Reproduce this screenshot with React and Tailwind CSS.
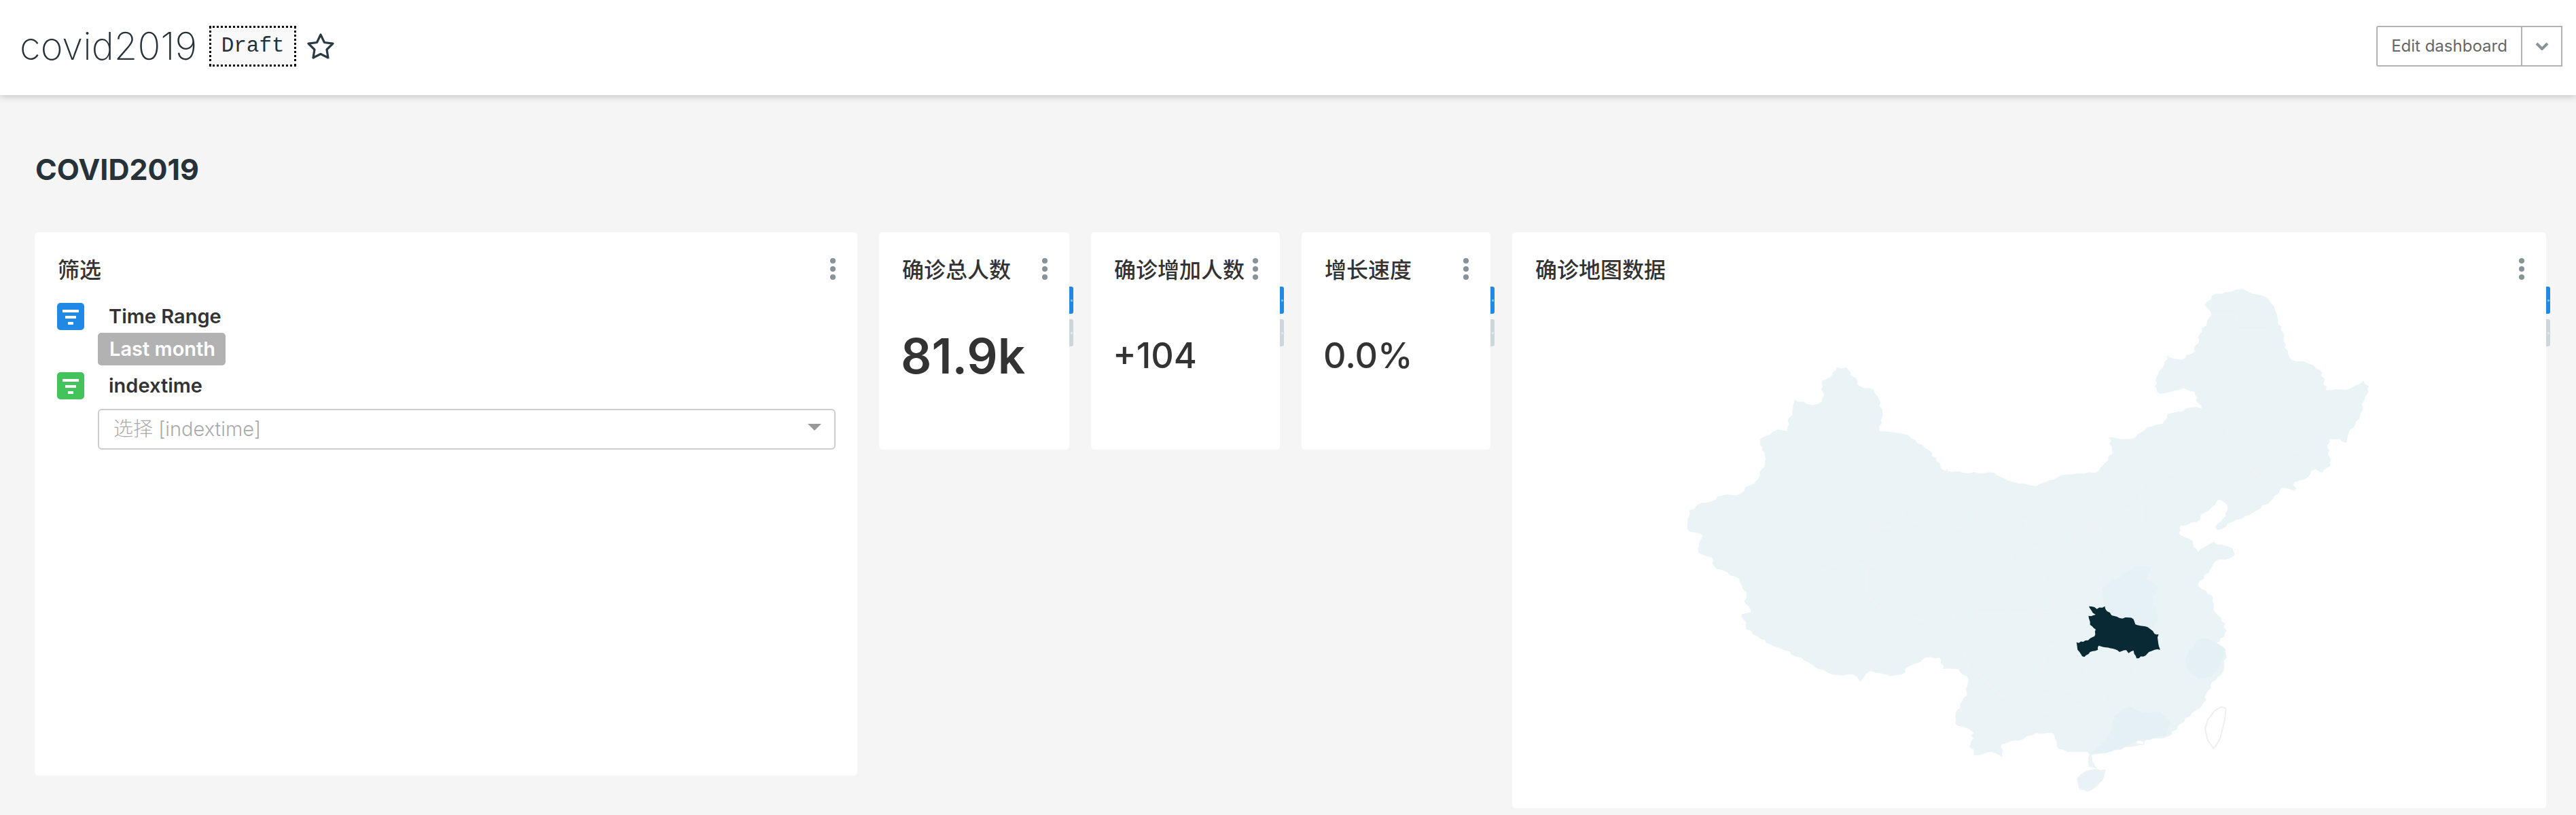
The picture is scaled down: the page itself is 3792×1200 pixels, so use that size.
const sansFont = { fontFamily: 'Inter, "Noto Sans CJK SC", sans-serif' };

// Map traces, in the coordinates they were measured in
const CHINA = "1030,215 1040,190 1060,180 1085,172 1100,185 1120,195 1135,240 1140,280 1150,335 1155,360 1180,370 1200,395 1205,440 1235,440 1260,415 1268,430 1262,460 1255,510 1240,545 1235,580 1225,570 1210,570 1212,640 1200,660 1190,650 1180,670 1160,685 1160,708 1140,700 1125,735 1100,765 1070,790 1048,812 1048,795 1060,775 1062,745 1050,730 1030,765 1018,790 995,800 992,820 1012,840 1020,870 1042,843 1070,860 1072,880 1045,895 1035,925 1020,955 1040,985 1045,1030 1060,1060 1058,1095 1045,1112 1060,1135 1055,1190 1040,1215 1028,1270 1000,1320 975,1360 950,1365 938,1380 900,1395 880,1405 865,1410 875,1445 862,1440 860,1400 830,1400 815,1385 810,1350 785,1350 760,1370 735,1380 737,1415 720,1400 695,1410 690,1380 695,1350 668,1325 670,1290 685,1250 685,1200 672,1180 650,1180 645,1150 625,1150 605,1170 590,1195 575,1200 545,1185 530,1215 520,1195 490,1195 470,1180 445,1150 420,1130 405,1120 385,1100 365,1075 358,1035 372,1030 362,1000 365,975 350,935 322,915 315,885 295,870 302,825 282,815 282,760 300,740 315,735 330,720 350,720 380,680 388,650 392,630 385,570 410,545 425,548 435,465 460,480 475,470 475,415 490,400 495,380 510,380 530,430 550,440 562,490 558,550 600,560 630,600 648,650 680,660 725,660 745,680 785,695 825,665 870,660 890,625 895,600 890,565 925,570 945,540 968,530 975,505 1018,485 1025,490 1015,445 1000,435 965,450 957,430 975,350 995,360 1015,340 1020,300 1040,240";

const BORDERS = [
  "648,650 620,700 595,745 590,790 550,815 555,850 565,880 560,910 540,905 510,895 480,915 445,935 415,925 385,935 375,965",
  "550,815 615,790 660,825 665,800 690,815 720,845 750,880 745,930 720,975 750,1000 745,1030 700,1030 670,990 665,1050 635,1060 600,1040 560,1020 540,985 540,910",
  "665,1050 680,1130 688,1180",
  "655,650 675,720 705,730 695,770 725,810 770,785 770,825 760,850 785,860 830,850 880,785 935,745 940,680 985,660 1005,720 1020,670 1040,690 1090,640 1115,680 1120,715 1100,730",
  "1040,240 1075,240 1078,280 1120,280 1125,320 1100,400 1075,460 1090,530 1130,550 1150,600 1180,610 1210,625",
  "1060,520 1065,580 1090,630 1115,680",
  "880,785 875,880 880,960 885,1010",
  "940,745 940,800 925,870 875,880",
  "780,860 800,900 795,960 810,1000 790,1030 760,1000",
  "815,875 845,890 845,940 815,950 815,875",
  "700,1030 750,1030 790,1030 860,1020",
  "850,1110 800,1120 795,1170 770,1200 760,1240 735,1255 700,1190 688,1100",
  "860,1150 855,1230 800,1250 770,1215",
  "780,1300 830,1290 885,1250 880,1300",
  "930,1150 925,1290",
  "1010,1200 975,1260 960,1300",
  "950,900 945,1000 955,1080",
  "1000,960 1030,1010 1045,1040",
];

const HUBEI = "525,338 550,342 560,350 595,338 605,360 625,378 660,390 700,388 722,395 730,418 762,425 795,438 815,460 833,462 830,490 840,530 815,530 790,540 765,560 735,568 725,548 722,533 700,545 690,532 660,540 630,525 600,520 568,512 565,530 530,540 505,562 490,550 475,530 470,497 500,495 530,480 550,470 555,440 530,420 523,380 555,375 535,355";
const HENAN = "580,260 640,220 740,160 800,165 780,215 830,250 810,300 830,400 795,438 762,425 730,418 722,395 700,388 660,390 625,378 605,360 595,338";
const ZHEJIANG = "950,570 1000,490 1040,480 1090,500 1130,530 1100,610 1060,650 1010,660 965,620";
const GUANGDONG = "620,900 640,820 700,780 760,810 840,805 885,850 870,905 820,920 730,935 680,960 600,985 530,990 580,950";
const HAINAN = "475,1100 500,1075 560,1060 595,1062 590,1090 560,1130 520,1155 485,1145";
const TAIWAN = "1080,800 1110,782 1130,790 1125,840 1105,920 1085,955 1075,965 1050,930 1038,880 1050,840";

// Break long edges into small wobbles so borders read like real coastlines
function roughen(points, step, amount) {
  const pts = points.split(" ").map((p) => p.split(",").map(Number));
  const out = [];
  let seed = 7;
  pts.forEach((a, i) => {
    const b = pts[(i + 1) % pts.length];
    const dx = b[0] - a[0];
    const dy = b[1] - a[1];
    const len = Math.hypot(dx, dy) || 1;
    const n = Math.max(1, Math.round(len / step));
    for (let k = 0; k < n; k++) {
      seed = (seed * 73 + 41) % 101;
      const off = k === 0 ? 0 : ((seed / 100) * 2 - 1) * amount;
      out.push(`${a[0] + (dx * k) / n - (dy / len) * off},${a[1] + (dy * k) / n + (dx / len) * off}`);
    }
  });
  return out.join(" ");
}

function Kebab() {
  return (
    <div className="flex flex-col gap-[4px] pt-[2px] shrink-0">
      <span className="block w-[8px] h-[8px] rounded-full bg-[#879399]"></span>
      <span className="block w-[8px] h-[8px] rounded-full bg-[#879399]"></span>
      <span className="block w-[8px] h-[8px] rounded-full bg-[#879399]"></span>
    </div>
  );
}

function CardHeader({ title }) {
  return (
    <div className="flex items-start justify-between">
      <div className="text-[32px] leading-[40px] font-medium text-[#333333] whitespace-nowrap">
        {title}
      </div>
      <Kebab />
    </div>
  );
}

// Blue and gray handles sticking out of a chart's right edge
function EdgeTabs() {
  return (
    <div className="absolute left-full top-[80px] flex flex-col gap-[8px]">
      <span className="flex items-center justify-center w-[6px] h-[40px] rounded-r-[3px] bg-[#2089e5]">
        <span className="block w-[3px] h-[3px] bg-[#7fbcf0]"></span>
      </span>
      <span className="flex items-center justify-center w-[6px] h-[40px] rounded-r-[3px] bg-[#ccd6db]">
        <span className="block w-[3px] h-[3px] bg-[#e2e8eb]"></span>
      </span>
    </div>
  );
}

function FilterIcon({ color }) {
  return (
    <div className={`w-[40px] h-[40px] rounded-[5px] shrink-0 flex flex-col items-center gap-[5px] pt-[10px] ${color}`}>
      <span className="block w-[24px] h-[4px] bg-white"></span>
      <span className="block w-[16px] h-[4px] bg-white"></span>
      <span className="block w-[8px] h-[4px] bg-white"></span>
    </div>
  );
}

function FilterLabel({ color, label }) {
  return (
    <div className="flex items-center gap-[36px] h-[40px]">
      <FilterIcon color={color} />
      <span className="text-[29px] leading-[40px] font-semibold text-[#333333]">{label}</span>
    </div>
  );
}

function StatCard({ title, value, width, big }) {
  return (
    <div className={`relative h-[320px] bg-white rounded-[5px] pl-[34px] pr-[32px] pt-[36px] shrink-0 ${width}`}>
      <CardHeader title={title} />
      <EdgeTabs />
      <div
        className={`mt-[66px] -ml-[2px] h-[80px] flex items-center text-[#333333] ${
          big ? "text-[71px] font-semibold" : "text-[52px] font-medium"
        }`}
      >
        {value}
      </div>
    </div>
  );
}

function ChinaMap() {
  return (
    <svg
      className="block w-[1522px] h-[768px]"
      viewBox="2226 422 1522 768"
      fill="none"
    >
      <g transform="translate(2200 330) scale(1.0153 0.555)">
        <polygon points={roughen(CHINA, 8, 3)} fill="#eaf3f6" />
        {BORDERS.map((line) => (
          <polyline
            key={line}
            points={line}
            stroke="#eff3f5"
            strokeWidth="2"
            strokeLinejoin="round"
            vectorEffect="non-scaling-stroke"
          />
        ))}
      </g>
      <g transform="translate(2900 780) scale(0.3333)">
        <polygon points={roughen(HENAN, 14, 4)} fill="#e6f1f6" />
        <polygon points={roughen(ZHEJIANG, 14, 4)} fill="#e5f0f4" />
        <polygon points={roughen(GUANGDONG, 14, 4)} fill="#e4f0f4" />
        <polygon points={roughen(HAINAN, 20, 4)} fill="#e9f2f6" stroke="#eef2f4" strokeWidth="6" />
        <polygon points="730,945 740,930 770,935 765,950" fill="#ffffff" stroke="#eef2f4" strokeWidth="5" />
        <polygon points={TAIWAN} fill="#ffffff" stroke="#eeeeee" strokeWidth="6" />
        <polygon points={roughen(HUBEI, 12, 4)} fill="#092935" />
      </g>
    </svg>
  );
}

export default function App() {
  return (
    <div className="h-[1200px] overflow-hidden bg-[#f5f5f5]" style={sansFont}>
      {/* Header */}
      <div className="relative h-[140px] bg-white flex items-center justify-between pl-[29px] pr-[20px] pb-[4px] shadow-[0_2px_10px_rgba(0,0,0,0.22)]">
        <div className="flex items-center">
          <h1 className="text-[56px] leading-[70px] font-extralight text-[#263238]">covid2019</h1>
          <div className="ml-[18px] h-[60px] w-[128px] flex items-center justify-center border-[3px] border-dotted border-black bg-[#f9f9f9] text-[31px] text-[#263238] font-['Liberation_Mono',monospace]">
            Draft
          </div>
          <svg className="ml-[16px] w-[40px] h-[38px]" viewBox="0 0 40 38" fill="none">
            <polygon
              points="20,2 25.5,13.5 38,15.2 29,24 31,36 20,30.5 9,36 11,24 2,15.2 14.5,13.5"
              stroke="#2b3a42"
              strokeWidth="3.2"
              strokeLinejoin="round"
            />
          </svg>
        </div>
        <div className="flex h-[60px]">
          <div className="w-[215px] flex items-center justify-center border-2 border-[#b2b2b2] rounded-[3px] text-[24px] text-[#666666] bg-white">
            Edit dashboard
          </div>
          <div className="w-[61px] -ml-[2px] flex items-center justify-center border-2 border-[#b2b2b2]">
            <svg className="w-[20px] h-[12px]" viewBox="0 0 20 12" fill="none">
              <path d="M2 2 L10 10 L18 2" stroke="#879399" strokeWidth="4" />
            </svg>
          </div>
        </div>
      </div>

      {/* Dashboard */}
      <div className="pl-[51px] pt-[83px]">
        <h2 className="pl-[1px] text-[43px] leading-[52px] font-bold text-[#263238] mb-[67px]">COVID2019</h2>
        <div className="flex items-start gap-[32px]">
          {/* Filter box */}
          <div className="w-[1211px] h-[800px] bg-white rounded-[5px] pl-[33px] pr-[32px] pt-[36px] shrink-0">
            <div className="pl-[1px]">
              <CardHeader title="筛选" />
            </div>
            <div className="mt-[28px]">
              <FilterLabel color="bg-[#2089e5]" label="Time Range" />
            </div>
            <div className="ml-[60px] mt-[4px] w-[188px] h-[48px] rounded-[5px] bg-[#b2b2b2] flex items-center pl-[17px] text-[29px] font-semibold text-white">
              Last month
            </div>
            <div className="mt-[10px]">
              <FilterLabel color="bg-[#44c25c]" label="indextime" />
            </div>
            <div className="ml-[60px] mt-[14px] h-[60px] border-2 border-[#cccccc] rounded-[6px] flex items-center justify-between pl-[21px] pr-[19px]">
              <span className="text-[29px] text-[#aaaaaa] font-light">选择 [indextime]</span>
              <svg className="w-[20px] h-[10px] mb-[6px]" viewBox="0 0 20 10">
                <polygon points="0,0 20,0 10,10" fill="#999999" />
              </svg>
            </div>
          </div>

          <StatCard title="确诊总人数" value="81.9k" width="w-[280px]" big />
          <StatCard title="确诊增加人数" value="+104" width="w-[278px]" />
          <StatCard title="增长速度" value="0.0%" width="w-[278px]" />

          {/* Map */}
          <div className="relative w-[1522px] h-[848px] bg-white rounded-[5px] shrink-0 flex flex-col">
            <div className="pl-[34px] pr-[32px] pt-[36px] h-[80px]">
              <CardHeader title="确诊地图数据" />
            </div>
            <EdgeTabs />
            <ChinaMap />
          </div>
        </div>
      </div>
    </div>
  );
}
